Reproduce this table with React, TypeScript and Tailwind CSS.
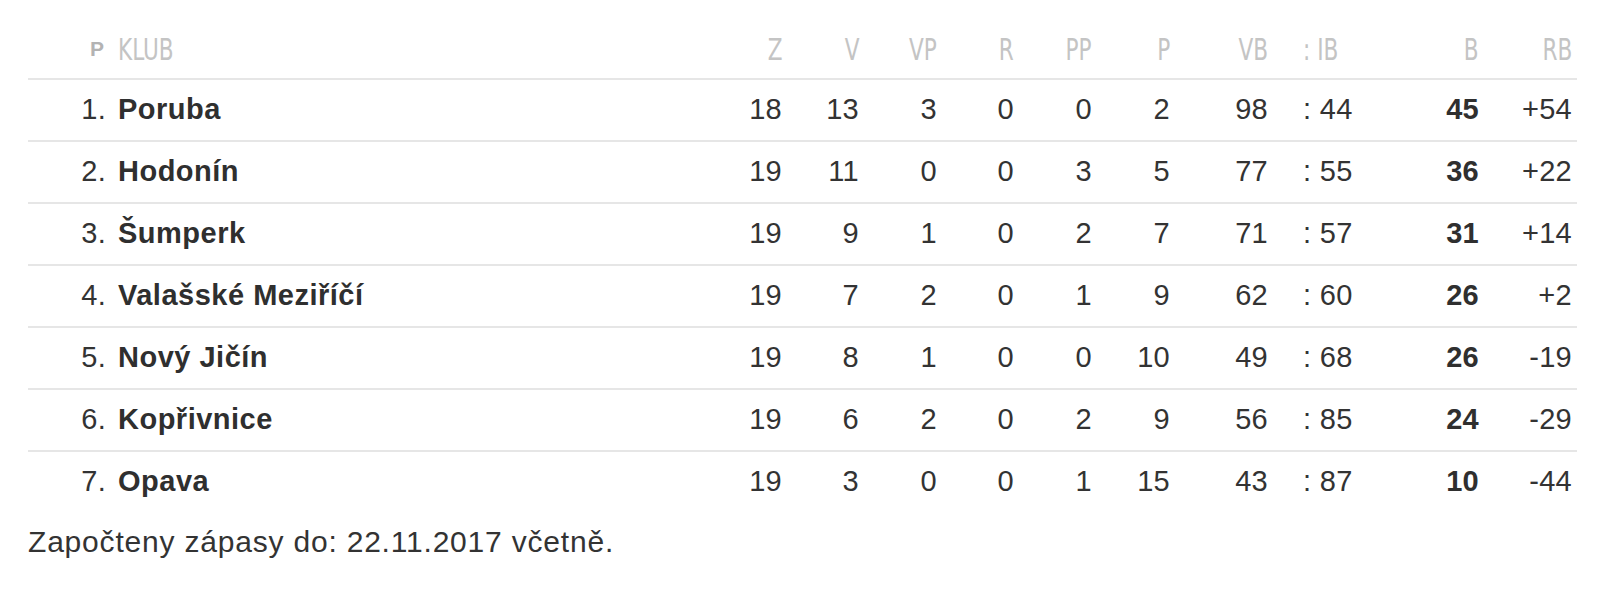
const rows = [
  { pos: 1, club: 'Poruba', z: 18, v: 13, vp: 3, r: 0, pp: 0, p: 2, vb: 98, ib: 44, b: 45, rb: '+54' },
  { pos: 2, club: 'Hodonín', z: 19, v: 11, vp: 0, r: 0, pp: 3, p: 5, vb: 77, ib: 55, b: 36, rb: '+22' },
  { pos: 3, club: 'Šumperk', z: 19, v: 9, vp: 1, r: 0, pp: 2, p: 7, vb: 71, ib: 57, b: 31, rb: '+14' },
  { pos: 4, club: 'Valašské Meziříčí', z: 19, v: 7, vp: 2, r: 0, pp: 1, p: 9, vb: 62, ib: 60, b: 26, rb: '+2' },
  { pos: 5, club: 'Nový Jičín', z: 19, v: 8, vp: 1, r: 0, pp: 0, p: 10, vb: 49, ib: 68, b: 26, rb: '-19' },
  { pos: 6, club: 'Kopřivnice', z: 19, v: 6, vp: 2, r: 0, pp: 2, p: 9, vb: 56, ib: 85, b: 24, rb: '-29' },
  { pos: 7, club: 'Opava', z: 19, v: 3, vp: 0, r: 0, pp: 1, p: 15, vb: 43, ib: 87, b: 10, rb: '-44' },
];

const cols = 'grid grid-cols-[90px_590px_74px_77px_78px_77px_78px_78px_98px_120px_91px_98px]';

function Head({ children, left }: { children: React.ReactNode; left?: boolean }) {
  return (
    <div className={left ? 'text-left' : 'text-right'}>
      <span
        className={
          'inline-block scale-x-[0.8] ' + (left ? 'origin-left' : 'origin-right')
        }
      >
        {children}
      </span>
    </div>
  );
}

export default function App() {
  return (
    <div className="bg-white min-h-[600px] pl-[28px] text-[#333] font-['Liberation_Sans',Arial,sans-serif]">
      <div className="w-[1549px]">
        {/* header */}
        <div
          className={
            cols +
            " h-[78px] pt-[22px] items-center text-[30px] leading-none text-[#c4c4c4] font-['Liberation_Sans_Narrow','DejaVu_Sans_Condensed',sans-serif]"
          }
        >
          <div className="text-right pr-[14px]">
            <span className="font-['Liberation_Sans',Arial,sans-serif] font-bold text-[21px] text-[#b3b3b3] align-[4px]">
              P
            </span>
          </div>
          <Head left>KLUB</Head>
          <Head>Z</Head>
          <Head>V</Head>
          <Head>VP</Head>
          <Head>R</Head>
          <Head>PP</Head>
          <Head>P</Head>
          <Head>VB</Head>
          <div className="pl-[35px]">
            <Head left>: IB</Head>
          </div>
          <Head>B</Head>
          <div className="pr-[5px]">
            <Head>RB</Head>
          </div>
        </div>

        {/* rows */}
        {rows.map((row) => (
          <div
            key={row.pos}
            className={cols + ' h-[62px] items-center border-t-2 border-[#e6e6e6] text-[29px] tracking-[0.3px]'}
          >
            <div className="text-right pr-[12px]">{row.pos}.</div>
            <div className="font-bold text-[#2f2f2f] tracking-[0.5px]">{row.club}</div>
            <div className="text-right">{row.z}</div>
            <div className="text-right">{row.v}</div>
            <div className="text-right">{row.vp}</div>
            <div className="text-right">{row.r}</div>
            <div className="text-right">{row.pp}</div>
            <div className="text-right">{row.p}</div>
            <div className="text-right">{row.vb}</div>
            <div className="pl-[35px]">: {row.ib}</div>
            <div className="text-right font-bold text-[#2f2f2f]">{row.b}</div>
            <div className="text-right pr-[5px]">{row.rb}</div>
          </div>
        ))}
      </div>

      <p className="mt-[10px] text-[30px] leading-[40px] tracking-[0.8px]">
        Započteny zápasy do: 22.11.2017 včetně.
      </p>
    </div>
  );
}
